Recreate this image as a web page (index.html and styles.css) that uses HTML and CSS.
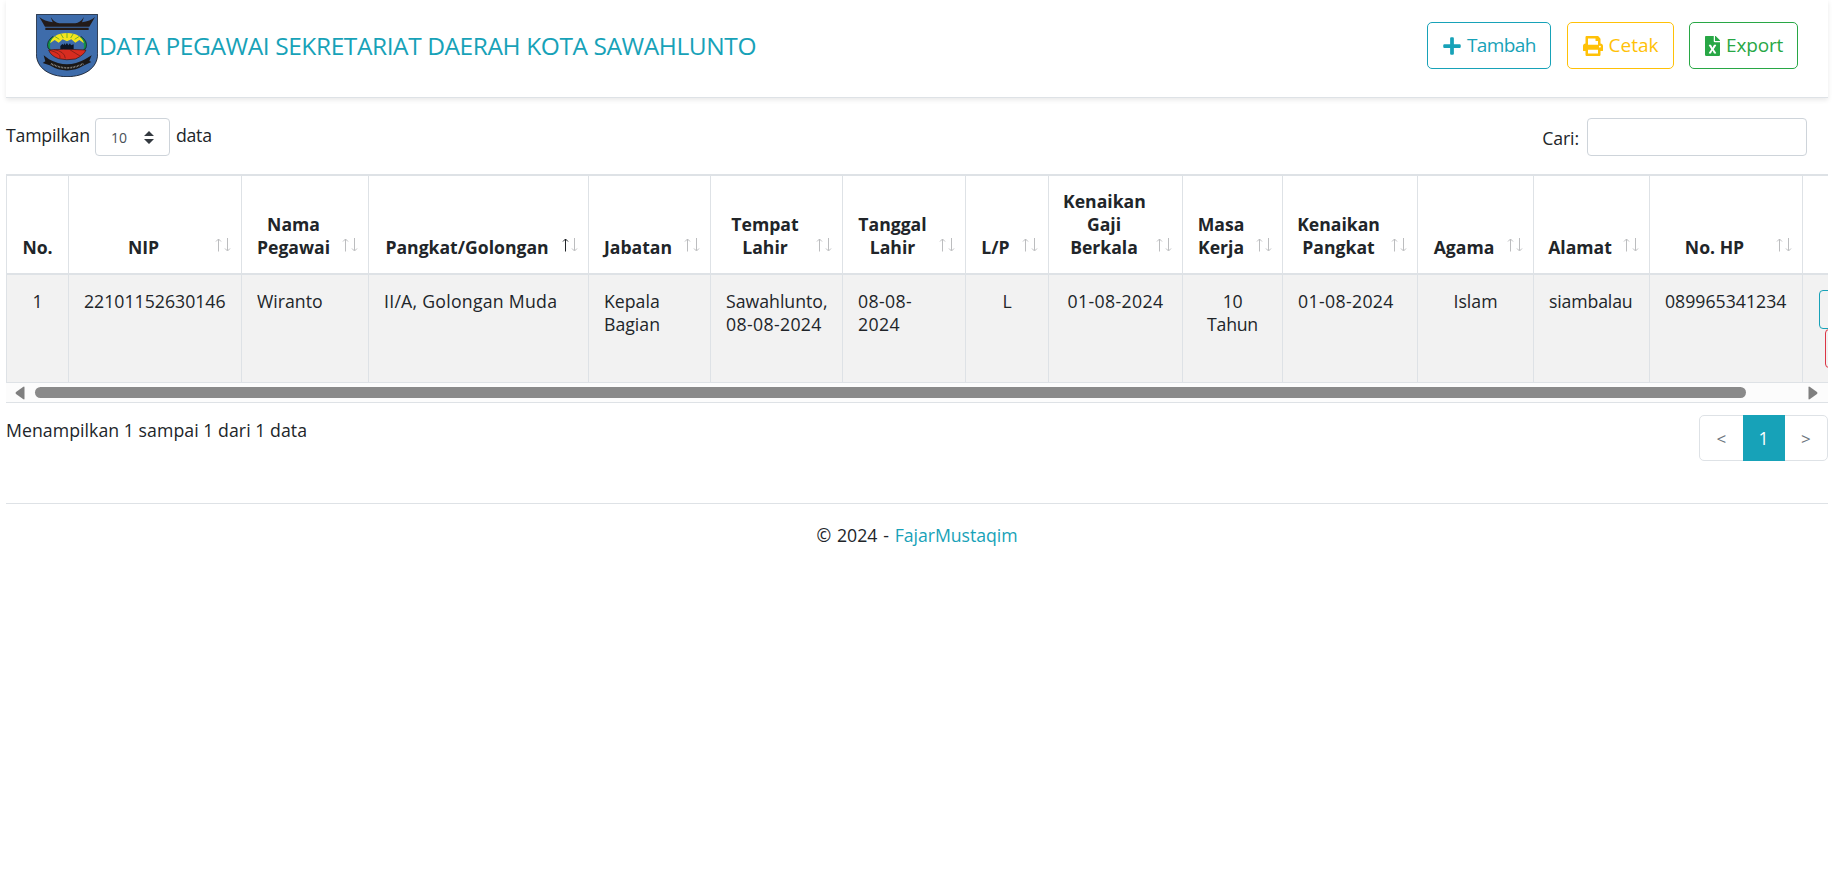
FILE: index.html
```html
<!DOCTYPE html>
<html lang="id">
<head>
<meta charset="utf-8">
<title>Data Pegawai</title>
<link rel="stylesheet" href="styles.css">
</head>
<body>
<svg class="defs" width="0" height="0">
  <symbol id="sort" viewBox="0 0 18 14"><path d="M4.5 13.5V1M2 3.5L4.500 1L7 3.500" class="up"/><path d="M13.500 0V12.500M11 10.500L13.500 13L16 10.500" class="down"/></symbol>
</svg>
<header class="topbar">
  <div class="brand">
    <svg class="logo" viewBox="18 12 186 189">
      <path d="M19 13H203V131C203 174 164 200 111 200S19 174 19 131Z" fill="#3e6cab" stroke="#151a26" stroke-width="2.500"/>
      <path d="M28 21Q44 34 68 37L62 21Q74 39 88 40H136Q150 39 162 21L156 37Q180 34 195 21L178 50H45Z" fill="#231b19"/>
      <path d="M46 53H176V60H46Z" fill="#231b19"/>
      <path d="M68 80Q48 94 54 114L68 126L74 84ZM154 80Q174 94 168 114L154 126L148 84Z" fill="#12914b" stroke="#111" stroke-width="2"/>
      <ellipse cx="111" cy="108" rx="51" ry="38" fill="#3e6cab"/>
      <path d="M60 100Q68 70 111 69Q154 70 162 100L148 90L136 98L124 88L111 94L98 88L86 98L74 90Z" fill="#f3e51e"/>
      <path d="M111 69V84M92 71L100 84M130 71L122 84M74 79L88 88M148 79L134 88" stroke="#5aa52a" stroke-width="2.500"/>
      <path d="M91 118V108L97 102L102 105V99L106 105L111 99L115 106L120 100L123 106L131 103V118Z" fill="#0c1526"/>
      <path d="M56 120Q90 116 168 120Q162 136 136 147Q110 152 86 146Q62 138 56 120Z" fill="#d82c20" stroke="#341310" stroke-width="2"/>
      <path d="M60 121Q94 130 90 144M72 119Q104 124 106 145M118 118Q140 132 150 138" fill="none" stroke="#651913" stroke-width="2"/>
      <path d="M41 136L57 148Q111 178 165 148L185 136L178 153L184 156L163 166Q111 197 59 166L38 159L46 154Z" fill="#1a1717"/>
      <path d="M63 161Q111 186 160 161" fill="none" stroke="#a9a9a4" stroke-width="5" stroke-dasharray="2 2.500"/>
    </svg>
    <span class="title">DATA PEGAWAI SEKRETARIAT DAERAH KOTA SAWAHLUNTO</span>
  </div>
  <div class="actions">
    <button class="btn info"><svg width="18" height="20" viewBox="0 0 448 512"><path d="M416 208H272V64c0-17.670-14.330-32-32-32h-32c-17.670 0-32 14.330-32 32v144H32c-17.670 0-32 14.330-32 32v32c0 17.670 14.330 32 32 32h144v144c0 17.670 14.330 32 32 32h32c17.670 0 32-14.330 32-32V304h144c17.670 0 32-14.330 32-32v-32c0-17.670-14.330-32-32-32z"/></svg><span>Tambah</span></button>
    <button class="btn warning"><svg width="20" height="20" viewBox="0 0 512 512"><path d="M448 192V77.250c0-8.490-3.370-16.620-9.370-22.630L393.370 9.370c-6-6-14.140-9.370-22.630-9.370H96C78.330 0 64 14.330 64 32v160c-35.350 0-64 28.650-64 64v112c0 8.840 7.160 16 16 16h48v96c0 17.670 14.330 32 32 32h320c17.670 0 32-14.330 32-32v-96h48c8.840 0 16-7.160 16-16V256c0-35.350-28.650-64-64-64zm-64 256H128v-96h256v96zm0-224H128V64h192v48c0 8.840 7.160 16 16 16h48v96zm48 72c-13.250 0-24-10.750-24-24 0-13.260 10.750-24 24-24s24 10.740 24 24c0 13.250-10.750 24-24 24z"/></svg><span>Cetak</span></button>
    <button class="btn success"><svg width="15" height="20" viewBox="0 0 384 512"><path d="M224 136V0H24C10.700 0 0 10.700 0 24v464c0 13.300 10.700 24 24 24h336c13.300 0 24-10.700 24-24V160H248c-13.200 0-24-10.800-24-24zm60.100 106.500L224 336l60.100 93.500c5.100 8-.6 18.500-10.100 18.500h-34.900c-4.400 0-8.500-2.400-10.600-6.300C208.900 405.500 192 373 192 373c-6.400 14.800-10 20-36.600 68.800-2.100 3.900-6.100 6.300-10.500 6.300H110c-9.500 0-15.200-10.500-10.100-18.500l60.300-93.500-60.300-93.500c-5.200-8 .6-18.500 10.100-18.500h34.800c4.400 0 8.500 2.400 10.600 6.300 26.100 48.800 20 33.600 36.600 68.500 0 0 6.100-11.700 36.600-68.500 2.100-3.900 6.200-6.300 10.600-6.300H274c9.500-.1 15.200 10.400 10.100 18.400zM384 121.900v6.100H256V0h6.100c6.400 0 12.500 2.500 17 7l97.900 98c4.500 4.500 7 10.600 7 16.900z"/></svg><span>Export</span></button>
  </div>
</header>
<div class="controls">
  <div class="length"><span class="lbl">Tampilkan</span><div class="select"><span>10</span><svg width="10" height="13" viewBox="0 0 10 13"><path d="M0 5L5 0L10 5ZM0 8H10L5 13Z"/></svg></div><span class="lbl">data</span></div>
  <label class="search"><span>Cari:</span><input type="text"></label>
</div>
<div class="table-wrap">
  <table>
    <colgroup><col class="c1"><col class="c2"><col class="c3"><col class="c4"><col class="c5"><col class="c6"><col class="c7"><col class="c8"><col class="c9"><col class="c10"><col class="c11"><col class="c12"><col class="c13"><col class="c14"><col class="c15"></colgroup>
    <thead><tr>
      <th class="plain">No.</th>
      <th>NIP<svg class="sort"><use href="#sort"/></svg></th>
      <th>Nama<br>Pegawai<svg class="sort"><use href="#sort"/></svg></th>
      <th>Pangkat/Golongan<svg class="sort asc"><use href="#sort"/></svg></th>
      <th>Jabatan<svg class="sort"><use href="#sort"/></svg></th>
      <th>Tempat<br>Lahir<svg class="sort"><use href="#sort"/></svg></th>
      <th>Tanggal<br>Lahir<svg class="sort"><use href="#sort"/></svg></th>
      <th>L/P<svg class="sort"><use href="#sort"/></svg></th>
      <th>Kenaikan<br>Gaji<br>Berkala<svg class="sort"><use href="#sort"/></svg></th>
      <th>Masa<br>Kerja<svg class="sort"><use href="#sort"/></svg></th>
      <th>Kenaikan<br>Pangkat<svg class="sort"><use href="#sort"/></svg></th>
      <th>Agama<svg class="sort"><use href="#sort"/></svg></th>
      <th>Alamat<svg class="sort"><use href="#sort"/></svg></th>
      <th>No. HP<svg class="sort"><use href="#sort"/></svg></th>
      <th></th>
    </tr></thead>
    <tbody><tr>
      <td class="center">1</td>
      <td>22101152630146</td>
      <td>Wiranto</td>
      <td class="golongan">II/A, Golongan Muda</td>
      <td>Kepala<br>Bagian</td>
      <td>Sawahlunto,<br><span class="date">08-08-2024</span></td>
      <td class="date">08-08-<br>2024</td>
      <td class="center">L</td>
      <td class="center date">01-08-2024</td>
      <td class="center tight">10<br>Tahun</td>
      <td class="date">01-08-2024</td>
      <td class="center">Islam</td>
      <td class="alamat">siambalau</td>
      <td>089965341234</td>
      <td><div class="row-actions"><button class="edit"></button><button class="delete"></button></div></td>
    </tr></tbody>
  </table>
  <div class="scrollbar">
    <svg width="10" height="14" viewBox="0 0 10 14"><path d="M9.500 1.500V12.500Q9.500 14 8 13L1 8Q0 7 1 6L8 1Q9.500 0 9.500 1.500Z"/></svg>
    <div class="thumb"></div>
    <svg width="10" height="14" viewBox="0 0 10 14"><path d="M.5 1.500V12.500Q.5 14 2 13L9 8Q10 7 9 6L2 1Q.5 0 .5 1.500Z"/></svg>
  </div>
</div>
<div class="summary">
  <div class="count">Menampilkan 1 sampai 1 dari 1 data</div>
  <div class="pagination"><span class="page arrow">&lt;</span><span class="page active">1</span><span class="page arrow">&gt;</span></div>
</div>
<footer>© 2024 - <a>FajarMustaqim</a></footer>
</body>
</html>
```
FILE: styles.css
```css
* { box-sizing: border-box; }
body {
  margin: 0;
  padding: 0 14px 0 6px;
  background: #fff;
  color: #212529;
  font: 17.7px/23px "Open Sans", sans-serif;
}
button { font: inherit; background: transparent; }
.defs { display: block; height: 0; }
.topbar {
  height: 98px;
  display: flex;
  justify-content: space-between;
  align-items: flex-start;
  padding: 14px 30px 0;
  border-bottom: 1px solid #dee2e6;
  box-shadow: 0 2px 5px rgba(0, 0, 0, .09);
}
.brand { display: flex; align-items: flex-start; }
.logo { width: 62px; height: 63px; }
.title {
  margin: 15px 0 0 1px;
  color: #17a2b8;
  font-size: 24.5px;
  letter-spacing: -.42px;
  line-height: 33px;
  white-space: nowrap;
}
.actions { display: flex; gap: 15.500px; padding-top: 8px; }
.btn {
  height: 47px;
  padding: 0 15px;
  display: flex;
  align-items: center;
  gap: 6px;
  border: 1px solid;
  border-radius: 5px;
  font-size: 19px;
}
.btn svg { flex: none; fill: currentColor; }
.info { color: #17a2b8; width: 124px; letter-spacing: -.6px; }
.warning { color: #ffc107; width: 107px; }
.success { color: #28a745; width: 109px; letter-spacing: -.15px; }
.controls {
  height: 76px;
  padding: 20px 21px 0 0;
  display: flex;
  justify-content: space-between;
}
.length, .search { display: flex; align-items: flex-start; }
.length .lbl { margin-top: 6px; letter-spacing: -.2px; }
.select {
  width: 75px;
  height: 38px;
  margin: 0 6px 0 5px;
  padding: 0 15px;
  display: flex;
  align-items: center;
  justify-content: space-between;
  border: 1px solid #ced4da;
  border-radius: 4px;
  font-size: 14px;
  color: #495057;
}
.select svg { fill: #343a40; }
.search span { margin: 9px 8px 0 0; letter-spacing: -.1px; }
.search input {
  width: 220px;
  height: 38px;
  border: 1px solid #ced4da;
  border-radius: 4px;
}
.table-wrap { overflow: hidden; border-bottom: 1px solid #dee2e6; }
table {
  width: 1936px;
  table-layout: fixed;
  border-collapse: separate;
  border-spacing: 0;
  border-left: 1px solid #dee2e6;
}
.c1 { width: 62px; } .c2 { width: 173px; } .c3 { width: 127px; }
.c4 { width: 220px; } .c5 { width: 122px; } .c6 { width: 132px; }
.c7 { width: 123px; } .c8 { width: 83px; } .c9 { width: 134px; }
.c10 { width: 100px; } .c11 { width: 135px; } .c12 { width: 116px; }
.c13 { width: 116px; } .c14 { width: 153px; } .c15 { width: 139px; }
th, td { border-right: 1px solid #dee2e6; white-space: nowrap; }
th {
  position: relative;
  height: 101px;
  padding: 0 37px 14px 14px;
  border-top: 2px solid #dee2e6;
  border-bottom: 2px solid #dee2e6;
  vertical-align: bottom;
  text-align: center;
  font-size: 17.6px;
}
th.plain { padding: 0 15px 14px; }
.sort {
  position: absolute;
  right: 9px;
  bottom: 21px;
  width: 18px;
  height: 14px;
  fill: none;
  stroke: #bcbdbf;
  --up: #bcbdbf;
}
.sort.asc { --up: #212529; }
.up { stroke: var(--up); }
td {
  height: 108px;
  padding: 15px 0 0 15px;
  background: #f2f2f2;
  border-bottom: 1px solid #dee2e6;
  vertical-align: top;
}
td.center { text-align: center; padding-left: 0; }
.date { letter-spacing: .35px; }
.golongan { letter-spacing: .25px; }
.tight { letter-spacing: -.25px; }
.alamat { letter-spacing: -.15px; }
.row-actions { display: flex; flex-direction: column; align-items: center; }
.row-actions button { height: 39px; border: 1px solid; border-radius: 4px; }
.edit { width: 121px; color: #17a2b8; }
.delete { width: 109px; color: #dc3545; }
.scrollbar {
  height: 19px;
  padding: 0 10px 0 9px;
  display: flex;
  align-items: center;
  background: #fcfcfc;
}
.scrollbar svg { fill: #7f7f7f; }
.thumb {
  width: 1711px;
  height: 11px;
  margin: 0 auto 0 10px;
  border-radius: 6px;
  background: #8a8a8a;
}
.summary {
  height: 101px;
  padding-top: 12px;
  display: flex;
  justify-content: space-between;
  align-items: flex-start;
  border-bottom: 1px solid #dee2e6;
}
.count { margin-top: 4px; letter-spacing: .05px; }
.pagination {
  width: 129px;
  height: 46px;
  display: flex;
  border: 1px solid #dee2e6;
  border-radius: 5px;
}
.page { flex: 1; display: flex; align-items: center; justify-content: center; }
.arrow { color: #6c757d; font-size: 17px; }
.page.active { flex: 0 0 42px; margin: -1px 0; background: #17a2b8; color: #fff; }
footer { padding-top: 20px; text-align: center; word-spacing: 1.2px; }
footer a { color: #17a2b8; letter-spacing: -.05px; }
```
